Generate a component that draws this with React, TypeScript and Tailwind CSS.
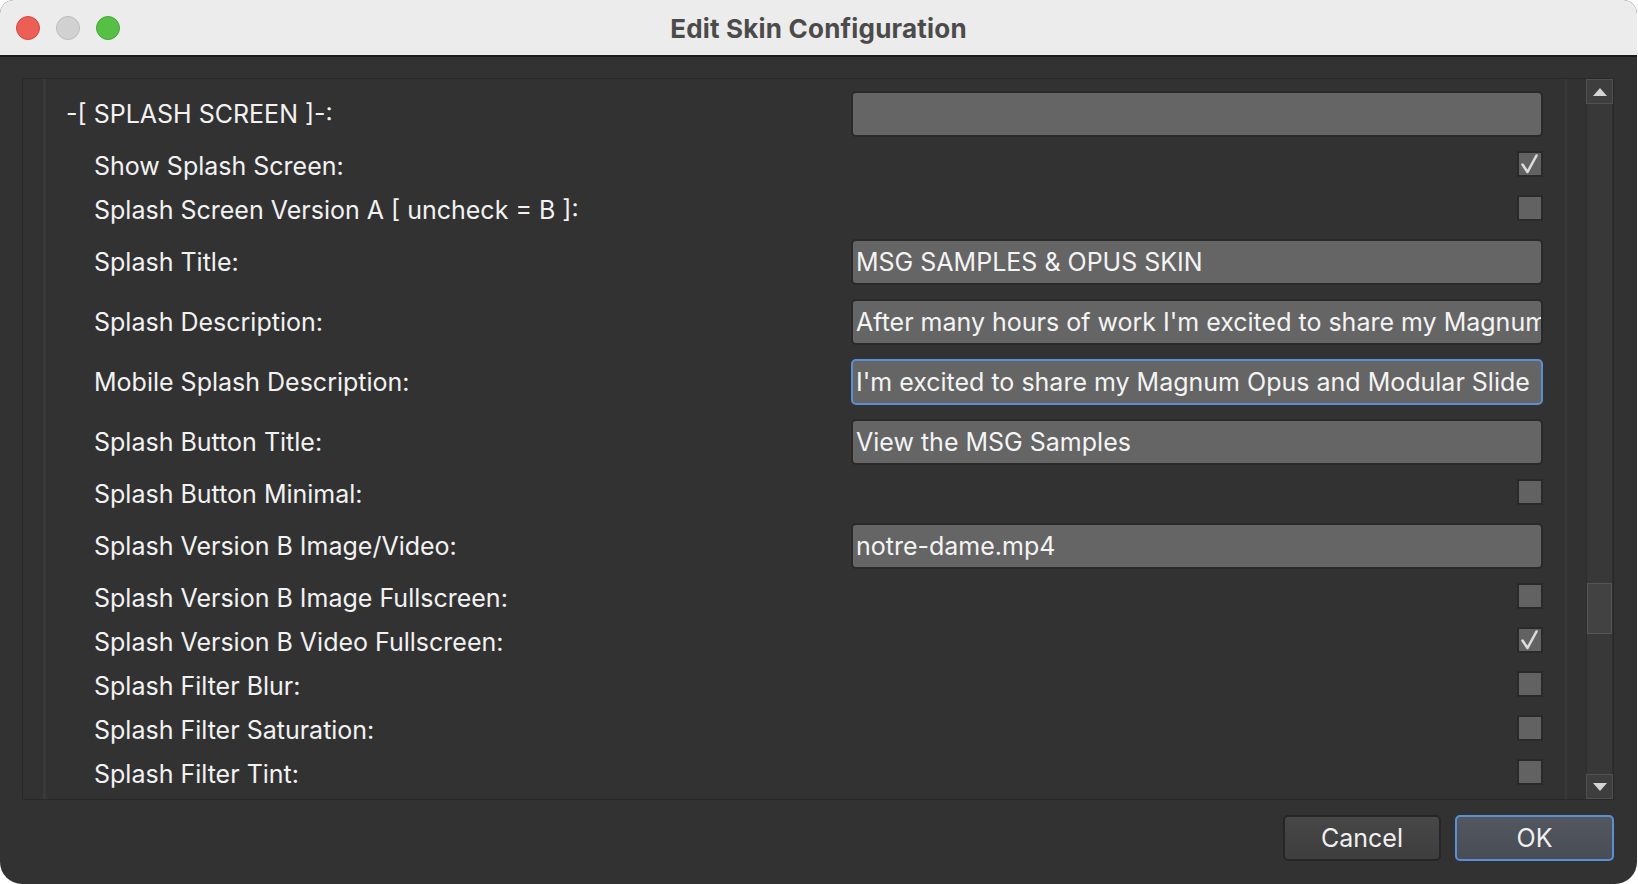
import React from "react";

const font = { fontFamily: "Inter, 'Noto Sans', sans-serif" };

function Check({ checked }: { checked?: boolean }) {
  return (
    <div className="self-start w-[26px] h-[26px] border-2 border-[#2a2a2a] bg-[#626262] relative">
      {checked && (
        <svg width="26" height="26" viewBox="0 0 26 26" className="absolute left-[-2px] top-[-2px]">
          <path d="M5.5 13.5 L10.5 21 L19.5 4.5" fill="none" stroke="#dcdcdc" strokeWidth="2.6" strokeLinecap="round" strokeLinejoin="round" />
        </svg>
      )}
    </div>
  );
}

function TextBox({ value, focused }: { value: string; focused?: boolean }) {
  return (
    <div
      className={
        focused
          ? "w-[692px] h-[46px] rounded-[5px] border-2 border-[#5b8fd4] bg-[#656565] flex items-center pl-[3px] overflow-hidden"
          : "w-[692px] h-[46px] rounded-[5px] border-2 border-[#2a2a2a] bg-[#656565] flex items-center pl-[3px] overflow-hidden"
      }
    >
      <span className="whitespace-nowrap text-[25px] text-[#f4f4f4] leading-none pt-[1px]">{value}</span>
    </div>
  );
}

function InputRow({ label, value, focused, section }: { label: string; value: string; focused?: boolean; section?: boolean }) {
  return (
    <div className="h-[46px] flex items-center justify-between pr-[22px]">
      <span className={section ? "pl-[20px] pt-[2px] text-[25px] text-[#f2f2f2]" : "pl-[48px] pt-[1px] text-[25px] text-[#f2f2f2]"}>{label}</span>
      <TextBox value={value} focused={focused} />
    </div>
  );
}

function CheckRow({ label, checked }: { label: string; checked?: boolean }) {
  return (
    <div className="h-[30px] flex items-center justify-between pr-[22px]">
      <span className="pl-[48px] pt-[2px] text-[25px] text-[#f2f2f2]">{label}</span>
      <Check checked={checked} />
    </div>
  );
}

export default function App() {
  return (
    <div className="w-[1638px] h-[884px] bg-white" style={font}>
      <div className="w-[1637px] h-[884px] rounded-t-[14px] rounded-b-[22px] overflow-hidden bg-[#323232] flex flex-col">
        {/* Title bar */}
        <div className="h-[57px] shrink-0 bg-[#ececec] border-b-2 border-[#1c1c1c] relative flex items-center justify-center">
          <div className="absolute left-[16px] top-[16px] flex gap-[16px]">
            <div className="w-[24px] h-[24px] rounded-full bg-[#ec5f57] border border-[#d4483f]" />
            <div className="w-[24px] h-[24px] rounded-full bg-[#d1d1d1] border border-[#bcbcbc]" />
            <div className="w-[24px] h-[24px] rounded-full bg-[#55c044] border border-[#43a835]" />
          </div>
          <span className="text-[26px] font-bold text-[#4b4b4b] pt-[2px] tracking-[0.2px]">Edit Skin Configuration</span>
        </div>

        {/* Content */}
        <div className="flex-1 flex flex-col pt-[21px] pl-[22px] pr-[23px]">
          <div className="h-[722px] border border-[#292929] flex">
            <div className="w-[20px] shrink-0" />
            <div className="flex-1 border-l-[3px] border-r-[2px] border-[#393939] overflow-hidden pt-[12px]">
              <div className="flex flex-col gap-[14px]">
                <InputRow section label="-[ SPLASH SCREEN ]-:" value="" />
                <CheckRow label="Show Splash Screen:" checked />
                <CheckRow label="Splash Screen Version A [ uncheck = B ]:" />
                <InputRow label="Splash Title:" value="MSG SAMPLES & OPUS SKIN" />
                <InputRow label="Splash Description:" value="After many hours of work I'm excited to share my Magnum Opus and Modular Slideshow" />
                <InputRow label="Mobile Splash Description:" value="I'm excited to share my Magnum Opus and Modular Slide" focused />
                <InputRow label="Splash Button Title:" value="View the MSG Samples" />
                <CheckRow label="Splash Button Minimal:" />
                <InputRow label="Splash Version B Image/Video:" value="notre-dame.mp4" />
                <CheckRow label="Splash Version B Image Fullscreen:" />
                <CheckRow label="Splash Version B Video Fullscreen:" checked />
                <CheckRow label="Splash Filter Blur:" />
                <CheckRow label="Splash Filter Saturation:" />
                <CheckRow label="Splash Filter Tint:" />
              </div>
            </div>
            <div className="w-[19px] shrink-0" />
            {/* Scrollbar */}
            <div className="w-[27px] shrink-0 flex flex-col">
              <div className="h-[25px] bg-[#3e3e3e] border border-[#505050] flex items-center justify-center">
                <svg width="14" height="8" viewBox="0 0 14 8"><path d="M0 8 L7 0 L14 8 Z" fill="#d4d4d4" /></svg>
              </div>
              <div className="flex-1 bg-[#383838] border-x border-[#2e2e2e] flex flex-col pt-[479px]">
                <div className="h-[51px] bg-[#424242] border border-[#555555]" />
              </div>
              <div className="h-[25px] bg-[#3e3e3e] border border-[#505050] flex items-center justify-center">
                <svg width="14" height="8" viewBox="0 0 14 8"><path d="M0 0 L7 8 L14 0 Z" fill="#d4d4d4" /></svg>
              </div>
            </div>
          </div>

          {/* Buttons */}
          <div className="flex justify-end gap-[14px] pt-[15px]">
            <div className="w-[158px] h-[46px] rounded-[5px] border-2 border-[#262626] bg-gradient-to-b from-[#474747] to-[#3e3e3e] flex items-center justify-center">
              <span className="text-[25px] text-[#f0f0f0] pt-[2px]">Cancel</span>
            </div>
            <div className="w-[159px] h-[46px] rounded-[5px] border-2 border-[#5b8fd4] bg-gradient-to-b from-[#525760] to-[#484d55] flex items-center justify-center">
              <span className="text-[25px] text-[#f0f0f0] pt-[2px]">OK</span>
            </div>
          </div>
        </div>
      </div>
    </div>
  );
}
